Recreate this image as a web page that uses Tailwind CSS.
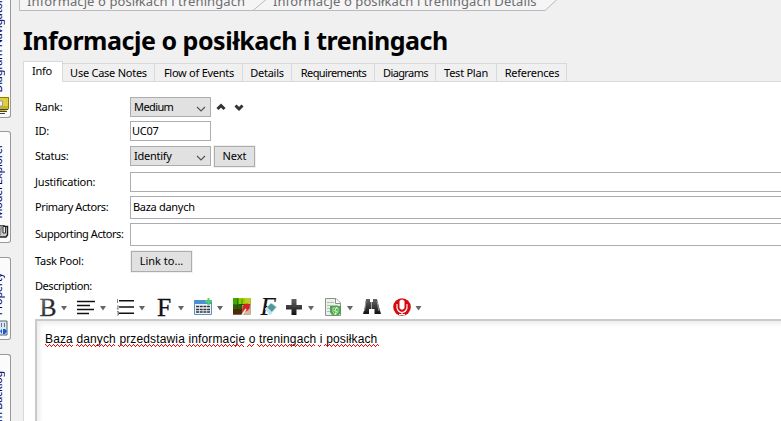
<!DOCTYPE html>
<html lang="pl">
<head>
<meta charset="utf-8">
<title>Informacje o posiłkach i treningach</title>
<script src="https://cdn.jsdelivr.net/npm/@tailwindcss/browser@4"></script>
</head>
<body class="w-[781px] h-[421px] overflow-hidden bg-[#f0f0f0] text-black text-[11px] leading-[14px] font-['Noto_Sans',sans-serif]">
<div class="flex w-[781px] h-[421px]">
  <!-- Collapsed side panels -->
  <aside class="w-[23px] h-[421px] shrink-0 overflow-hidden flex flex-col gap-[14px] text-[#000070] whitespace-nowrap -tracking-[0.3px]">
    <div class="relative w-[11px] h-[118px] shrink-0 bg-[#fbfbfb] border-r border-b border-[#999] rounded-br-[3px] overflow-hidden">
      <span class="absolute right-[5px] bottom-[25px] [writing-mode:vertical-rl] rotate-180">Diagram Navigator</span>
      <svg class="absolute left-0 bottom-[2px]" width="9" height="18" viewBox="0 0 9 18"><path d="M0 0H9V12L5 14H0Z" fill="#c9b51c"/><path d="M0 1H8V9H0Z" fill="#e0ce3a"/><path d="M-1 4H2.500V9H-1Z" fill="#eef1ff" stroke="#99a"/><path d="M0 14.500H7M0 16.500H5M0 12.500H8" stroke="#444"/><path d="M8.500 0V12M0 .5H9" stroke="#8c7d00"/></svg>
    </div>
    <div class="relative w-[11px] h-[112px] -mt-px shrink-0 bg-[#fbfbfb] border-r border-y border-[#999] rounded-r-[3px] overflow-hidden">
      <span class="absolute right-[5px] bottom-[24px] [writing-mode:vertical-rl] rotate-180">Model Explorer</span>
      <svg class="absolute left-0 bottom-[3px]" width="9" height="16" viewBox="0 0 9 16"><path d="M-1 2.500H4.500V12H-1Z" fill="#999" stroke="#555"/><path d="M3 3.500H7.500V12L6 14H0" fill="#ccc" stroke="#222" stroke-width="1.400"/><path d="M3 4V10H5.500V4" stroke="#333" fill="#eee"/></svg>
    </div>
    <div class="relative w-[11px] h-[83px] shrink-0 bg-[#fbfbfb] border-r border-y border-[#999] rounded-r-[3px] overflow-hidden">
      <span class="absolute right-[5px] bottom-[24px] [writing-mode:vertical-rl] rotate-180">Property</span>
      <svg class="absolute left-0 bottom-[2px]" width="9" height="18" viewBox="0 0 9 18"><path d="M-1 2H7V16H-1" fill="#dce6f5" stroke="#567"/><path d="M1.500 4V8M4.500 4V8" stroke="#678" /><path d="M0 12L2 10V15ZM3 10H5L7 12L5 15H3Z" fill="#1859d0"/></svg>
    </div>
    <div class="relative w-[11px] h-[100px] shrink-0 bg-[#fbfbfb] border-r border-t border-[#999] rounded-tr-[3px] overflow-hidden">
      <span class="absolute right-[5px] top-[16px] [writing-mode:vertical-rl] rotate-180">Team Backlog</span>
    </div>
  </aside>

  <main class="w-[758px] shrink-0 flex flex-col">
    <!-- Breadcrumb -->
    <nav class="relative h-[11px] -ml-[4px] text-[13px] leading-[16px] text-[#6d6d6d] whitespace-nowrap">
      <svg class="absolute left-0 top-0" width="560" height="12"><path d="M.5 0V10.500H526L538 0Z" fill="#f5f5f6"/><path d="M.5 0V10.500H526L538 -.5M234 10.500L247 -.5" fill="none" stroke="#b9bbc0"/></svg>
      <span class="absolute left-[8px] -top-[7px] tracking-[0.1px]">Informacje o posiłkach i treningach</span>
      <span class="absolute left-[254px] -top-[7px] tracking-[0.09px]">Informacje o posiłkach i treningach Details</span>
    </nav>
    <h1 class="h-[50px] pt-[13px] text-[25px] leading-[32px] font-bold whitespace-nowrap -tracking-[0.47px]">Informacje o posiłkach i treningach</h1>
    <!-- Tabs -->
    <div class="flex items-end h-[21px] whitespace-nowrap text-center -tracking-[0.25px]">
      <div class="w-[40px] h-[21px] pt-[2px] pr-[2px] bg-white border border-b-0 border-[#d9d9d9]">Info</div>
      <div class="w-[92px] h-[19px] pt-[2px] border-y border-r border-[#d9d9d9]">Use Case Notes</div>
      <div class="w-[88px] h-[19px] pt-[2px] pl-px border-y border-r border-[#d9d9d9]">Flow of Events</div>
      <div class="w-[49px] h-[19px] pt-[2px] border-y border-r border-[#d9d9d9]">Details</div>
      <div class="w-[83px] h-[19px] pt-[2px] pl-px border-y border-r border-[#d9d9d9] -tracking-[0.6px]">Requirements</div>
      <div class="w-[61px] h-[19px] pt-[2px] pl-px border-y border-r border-[#d9d9d9] -tracking-[0.6px]">Diagrams</div>
      <div class="w-[61px] h-[19px] pt-[2px] border-y border-r border-[#d9d9d9]">Test Plan</div>
      <div class="w-[70px] h-[19px] pt-[2px] pl-px border-y border-r border-[#d9d9d9]">References</div>
      <div class="grow h-[19px] border-b border-[#d9d9d9]"></div>
    </div>
    <!-- Form -->
    <section class="h-[339px] bg-white border-l border-[#d9d9d9] pl-[11px] pt-[15px] whitespace-nowrap -tracking-[0.25px]">
      <div class="flex items-center h-[20px] mb-[4px]">
        <label class="w-[95px]">Rank:</label>
        <div class="flex items-center justify-between w-[81px] h-[20px] px-[3px] bg-[#e1e1e1] border border-[#adadad] -tracking-[0.6px]">Medium<svg class="mt-[3px] mr-px" width="10" height="6"><path d="M1 1L5 5L9 1" fill="none" stroke="#555" stroke-width="1.200"/></svg></div>
        <svg class="ml-[5px]" width="30" height="12"><path d="M1.500 7L5 3.500L8.500 7" transform="translate(0 1)" fill="none" stroke="#333" stroke-width="3"/><path d="M19.500 4.500L23 8L26.500 4.500" fill="none" stroke="#333" stroke-width="3"/></svg>
      </div>
      <div class="flex items-center h-[20px] mb-[5px]">
        <label class="w-[95px]">ID:</label>
        <div class="w-[81px] h-[20px] pl-px pt-[2px] border border-[#abadb3]">UC07</div>
      </div>
      <div class="flex items-center h-[20px] mb-[6px]">
        <label class="w-[95px]">Status:</label>
        <div class="flex items-center justify-between w-[81px] h-[20px] px-[3px] bg-[#e1e1e1] border border-[#adadad]">Identify<svg class="mt-[3px] mr-px" width="10" height="6"><path d="M1 1L5 5L9 1" fill="none" stroke="#555" stroke-width="1.200"/></svg></div>
        <div class="ml-[3px] mt-px w-[41px] h-[21px] pt-[2px] text-center bg-[#e1e1e1] border border-[#adadad] outline outline-[#f0f0f0] tracking-normal">Next</div>
      </div>
      <div class="flex items-center h-[20px] mb-[4px]">
        <label class="w-[95px] -tracking-[0.2px]">Justification:</label>
        <div class="grow h-[20px] border border-r-0 border-[#abadb3]"></div>
      </div>
      <div class="flex items-center h-[23px] mb-[4px]">
        <label class="w-[95px] pb-px -tracking-[0.4px]">Primary Actors:</label>
        <div class="grow h-[23px] pl-[2px] pt-[3px] border border-r-0 border-[#abadb3] -tracking-[0.3px]">Baza danych</div>
      </div>
      <div class="flex items-center h-[23px] mb-[5px]">
        <label class="w-[95px] pb-px -tracking-[0.45px]">Supporting Actors:</label>
        <div class="grow h-[23px] border border-r-0 border-[#abadb3]"></div>
      </div>
      <div class="flex items-center h-[21px] mb-[7px]">
        <label class="w-[95px] pb-px">Task Pool:</label>
        <div class="ml-px w-[61px] h-[21px] pt-[2px] text-center bg-[#e1e1e1] border border-[#adadad] outline outline-[#f0f0f0] tracking-normal">Link to...</div>
      </div>
      <label class="block h-[14px] -tracking-[0.45px]">Description:</label>
      <!-- Editor toolbar -->
      <svg class="block tracking-normal" width="400" height="26" viewBox="35 293 400 26">
        <defs>
          <linearGradient id="g" x1="0" y1="0" x2="0" y2="1"><stop stop-color="#666"/><stop offset="1" stop-color="#111"/></linearGradient>
          <linearGradient id="b" x1="0" y1="0" x2="1" y2="1"><stop stop-color="#999"/><stop offset=".6" stop-color="#222"/></linearGradient>
          <path id="d" d="M0 0H6L3 4.500Z" fill="#666"/>
        </defs>
        <text x="39.500" y="315.500" font-family="Liberation Serif, serif" font-size="25.500" fill="url(#b)" stroke="#444" stroke-width=".3">B</text>
        <use href="#d" x="61" y="306"/>
        <path d="M77 301.500H95M77 305.500H90M77 309.500H94M77 313.500H89" stroke="#111" stroke-width="1.400"/>
        <use href="#d" x="100" y="306"/>
        <path d="M119 300.700H134M119 307H134M119 313.300H134" stroke="#111" stroke-width="1.600"/>
        <path d="M117.500 299V303M117 306H118.500L117 309H119M117 311.500H118.500V315H117M117 313H118.500" stroke="#666" stroke-width=".8" fill="none"/>
        <use href="#d" x="139" y="306"/>
        <text x="157" y="315.500" font-family="Liberation Serif, serif" font-size="25.500" fill="#111" stroke="#111" stroke-width=".3">F</text>
        <use href="#d" x="178" y="306"/>
        <path d="M194.500 300.500H211.500V314.500H194.500Z" fill="#edf4fb" stroke="#5c8fc5"/><path d="M194 300H212V304H194Z" fill="#4d8fd5"/>
        <path d="M196 306.500H210M196 309.500H210M196 312H210" stroke="#333" stroke-width="1.500" stroke-dasharray="3 .7"/>
        <path d="M208.500 298V305M205 301.500H212" stroke="#4fd65c" stroke-width="2"/>
        <use href="#d" x="217" y="306"/>
        <path d="M233 298H250.500V314.500H233Z" fill="#315f08"/><path d="M233 298H239V305H233Z" fill="#44a800"/><path d="M239 298H250.500V304H239Z" fill="#8ed000"/><path d="M245 298H250.500V304H245Z" fill="#c0cc24"/><path d="M233 309H242V314.500H233Z" fill="#542807"/><path d="M242 305H250.500V314.500H242Z" fill="#d5b8a0"/><path d="M233 304.500H243M233 309.500H243M237.500 299V314M242 299V314" stroke="#263d08" stroke-width=".5"/><path d="M242 313L243 306Q246 302 249.500 304.500Q251 308 247 311Z" fill="#d92124"/><path d="M242 315L246 309" stroke="#eee" stroke-width="1.500"/>
        <text x="260.500" y="315" font-family="Liberation Serif, serif" font-size="25" font-style="italic" fill="#111" stroke="#111" stroke-width=".2">F</text>
        <path d="M265.500 309L271 303L276.500 307L270 314.500Z" fill="#529a91" stroke="#b8dcea"/><path d="M265 309L267 307L272 312L270 314.500Z" fill="#c5e3f0"/>
        <path d="M291.500 299H296.500V305H302V309.500H296.500V315H291.500V309.500H286V305H291.500Z" fill="url(#g)"/>
        <use href="#d" x="308" y="306"/>
        <path d="M325.500 298.500H336L340.500 303V315.500H325.500Z" fill="#eee" stroke="#8c918c"/><path d="M335.500 298.500V303.500H340.500" fill="#fff" stroke="#8c918c"/><path d="M327 302.500H334M327 305.500H338M327 308.500H331M327 311.500H330" stroke="#a7c79e"/>
        <path d="M330 306H341V312Q340 315 335.500 316Q331 315 330 312Z" fill="#4ba354"/><path d="M333 308H338V312L335.500 315L333 312Z" fill="none" stroke="#e7ffe7" stroke-width=".7"/><path d="M337 307L334.500 311H336.500L335 315" stroke="#efffb0" fill="none"/>
        <use href="#d" x="347" y="306"/>
        <path d="M366 299H370V302H373V299H377L379 307L381 314H374.500V309H369V314H363L365 307Z" fill="url(#g)"/><path d="M366 301L364.500 311M377 301L379 311" stroke="#999"/><path d="M371.500 302V309" stroke="#bbb" stroke-width=".8"/>
        <circle cx="402" cy="307" r="8.800" fill="#d20b11"/><path d="M399.500 301Q402 298 404.500 301V308Q402 311.500 399.500 308Z" fill="#fff"/><path d="M397 304V308Q398 312 402 312.500Q406 312 407 308V304M402 312V315M399 314.500H405" stroke="#fff" fill="none" stroke-width="1.100"/>
        <use href="#d" x="415.500" y="306"/>
      </svg>
      <!-- Editor -->
      <div class="h-[103px] border-l-2 border-t-2 border-[#cacaca] pl-[8px] pt-[11px] shadow-[inset_3px_3px_4px_#eeeeee]">
        <p class="relative w-[334px] h-[18px] font-['Liberation_Sans',sans-serif] text-[12px] leading-[14px] tracking-[0.14px]">Baza danych przedstawia informacje o treningach i posiłkach
          <svg class="absolute left-0 top-[12px]" width="335" height="4" shape-rendering="crispEdges">
            <defs><pattern id="w" width="4" height="4" patternUnits="userSpaceOnUse"><path d="M0 0H1V1H0ZM1 1H2V2H1ZM2 2H3V3H2ZM3 1H4V2H3Z" fill="#ff0000"/></pattern></defs>
            <path d="M0 0H28V4H0ZM31 0H70V4H31ZM73 0H138V4H73ZM141 0H199V4H141ZM202 0H209V4H202ZM212 0H270V4H212ZM273 0H276V4H273ZM279 0H334V4H279Z" fill="url(#w)"/>
          </svg>
        </p>
      </div>
    </section>
  </main>
</div>
</body>
</html>
